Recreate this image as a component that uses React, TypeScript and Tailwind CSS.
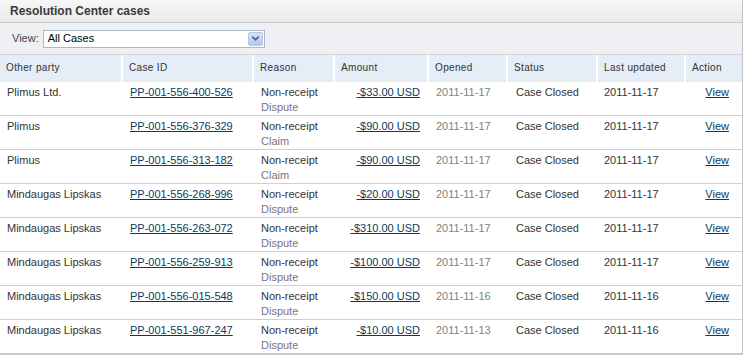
import { ChevronDown } from "lucide-react";

type CaseRow = {
  party: string;
  id: string;
  kind: string;
  amount: string;
  opened: string;
  updated: string;
};

const CASES: CaseRow[] = [
  { party: "Plimus Ltd.", id: "PP-001-556-400-526", kind: "Dispute", amount: "-$33.00 USD", opened: "2011-11-17", updated: "2011-11-17" },
  { party: "Plimus", id: "PP-001-556-376-329", kind: "Claim", amount: "-$90.00 USD", opened: "2011-11-17", updated: "2011-11-17" },
  { party: "Plimus", id: "PP-001-556-313-182", kind: "Claim", amount: "-$90.00 USD", opened: "2011-11-17", updated: "2011-11-17" },
  { party: "Mindaugas Lipskas", id: "PP-001-556-268-996", kind: "Dispute", amount: "-$20.00 USD", opened: "2011-11-17", updated: "2011-11-17" },
  { party: "Mindaugas Lipskas", id: "PP-001-556-263-072", kind: "Dispute", amount: "-$310.00 USD", opened: "2011-11-17", updated: "2011-11-17" },
  { party: "Mindaugas Lipskas", id: "PP-001-556-259-913", kind: "Dispute", amount: "-$100.00 USD", opened: "2011-11-17", updated: "2011-11-17" },
  { party: "Mindaugas Lipskas", id: "PP-001-556-015-548", kind: "Dispute", amount: "-$150.00 USD", opened: "2011-11-16", updated: "2011-11-16" },
  { party: "Mindaugas Lipskas", id: "PP-001-551-967-247", kind: "Dispute", amount: "-$10.00 USD", opened: "2011-11-13", updated: "2011-11-16" },
];

const HEADERS = ["Other party", "Case ID", "Reason", "Amount", "Opened", "Status", "Last updated", "Action"];
const WIDTHS = ["w-[122px]", "w-[131px]", "w-[81px]", "w-[94px]", "w-[79px]", "w-[90px]", "w-[88px]", "w-[57px]"];

export default function App() {
  return (
    <div className="w-[745px] h-[361px] bg-white font-['Liberation_Sans',Arial,sans-serif] text-[11px] text-[#333]">
      <div className="w-[743px] border-r border-[#c4c4c4]">
        {/* title */}
        <div className="h-[23px] flex items-center pl-[10px] bg-gradient-to-b from-[#f7f7f7] to-[#e9e9e9] border-b border-[#c9c9c9]">
          <h2 className="text-[12px] font-bold text-[#3a3a3a]">Resolution Center cases</h2>
        </div>

        {/* filter */}
        <div className="h-[32px] flex items-center gap-[4px] pl-[12px] bg-[#eef0f3] border-b border-[#cfd3d8]">
          <span className="text-[11px] text-[#444]">View:</span>
          <div className="w-[222px] h-[18px] flex items-center justify-between bg-white border border-[#a9b8c9] pl-[4px] pr-[1px]">
            <span className="text-[11px] text-black">All Cases</span>
            <div className="w-[15px] h-[14px] flex items-center justify-center rounded-[2px] bg-gradient-to-b from-[#d6e2f7] to-[#b6c9ee] border border-[#b5c6e6]">
              <ChevronDown size={11} strokeWidth={3.5} className="text-[#4d6185]" />
            </div>
          </div>
        </div>

        <table className="table-fixed border-collapse w-[742px]">
          <thead>
            <tr className="h-[26px] bg-[#e5edf7] border-b-2 border-[#e9ecef]">
              {HEADERS.map((h, i) => (
                <th
                  key={h}
                  className={`${WIDTHS[i]} text-left font-normal text-[10px] tracking-[0.35px] text-[#333] pl-[6px] ${i > 0 ? "border-l-2 border-white" : ""}`}
                >
                  {h}
                </th>
              ))}
            </tr>
          </thead>
          <tbody>
            {CASES.map((c, i) => (
              <tr
                key={c.id}
                className={`h-[34px] align-top leading-[15px] ${i === CASES.length - 1 ? "border-b-2 border-[#c8c8c8]" : "border-b border-[#cfcfcf]"}`}
              >
                <td className="pl-[7px] pt-[3px]">{c.party}</td>
                <td className="pl-[8px] pt-[3px]">
                  <a href="#" className="text-[#0c3a5d] underline">{c.id}</a>
                </td>
                <td className="pl-[8px] pt-[3px]">
                  <div>Non-receipt</div>
                  <div className="text-[#777]">{c.kind}</div>
                </td>
                <td className="pr-[8px] pt-[3px] text-right">
                  <a href="#" className="text-[#0c3a5d] underline">{c.amount}</a>
                </td>
                <td className="pl-[8px] pt-[3px] text-[#808080]">{c.opened}</td>
                <td className="pl-[9px] pt-[3px]">Case Closed</td>
                <td className="pl-[7px] pt-[3px]">{c.updated}</td>
                <td className="pr-[13px] pt-[3px] text-right">
                  <a href="#" className="text-[#0c3a5d] underline">View</a>
                </td>
              </tr>
            ))}
          </tbody>
        </table>
      </div>
    </div>
  );
}
